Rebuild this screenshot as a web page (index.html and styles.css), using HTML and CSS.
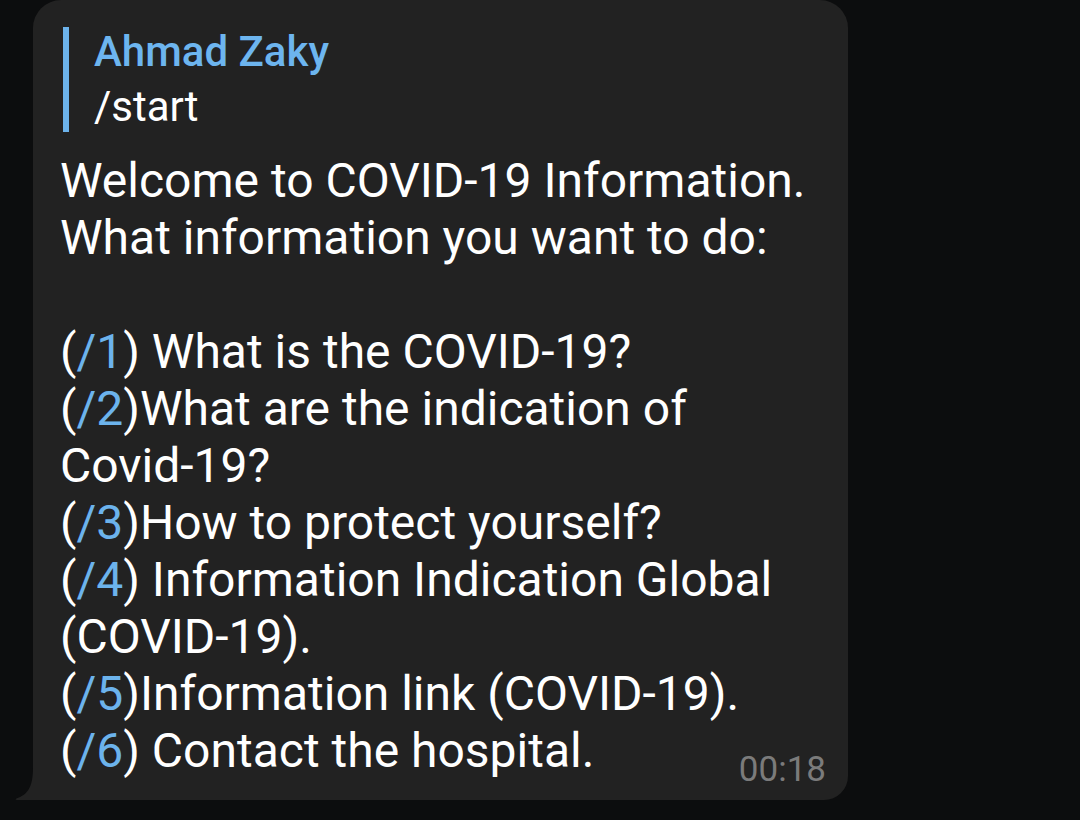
FILE: index.html
```html
<!DOCTYPE html>
<html>
<head>
<meta charset="utf-8">
<link rel="stylesheet" href="styles.css">
</head>
<body>
<div class="chat">
  <div class="bubble">
    <svg class="tail" width="18" height="32" viewBox="0 0 18 32"><path d="M18 0 C18 20 12 27 1.5 30.5 C0 31 0.5 32 2 32 L18 32 Z" fill="#222222"/></svg>
    <div class="reply">
      <div class="reply-name">Ahmad Zaky</div>
      <div class="reply-text">/start</div>
    </div>
    <div class="msg">
      <div class="line">Welcome to COVID-19 Information.</div>
      <div class="line">What information you want to do:</div>
      <div class="line blank">&nbsp;</div>
      <div class="line">(<span class="cmd">/1</span>) What is the COVID-19?</div>
      <div class="line">(<span class="cmd">/2</span>)What are the indication of</div>
      <div class="line">Covid-19?</div>
      <div class="line">(<span class="cmd">/3</span>)How to protect yourself?</div>
      <div class="line">(<span class="cmd">/4</span>) Information Indication Global</div>
      <div class="line">(COVID-19).</div>
      <div class="line">(<span class="cmd">/5</span>)Information link (COVID-19).</div>
      <div class="last-row">
        <div class="line">(<span class="cmd">/6</span>) Contact the hospital.</div>
        <div class="time">00:18</div>
      </div>
    </div>
  </div>
</div>
</body>
</html>
```

FILE: styles.css
```css
html, body {
  margin: 0;
  padding: 0;
}
body {
  background: #0c0d0e;
  width: 1080px;
  height: 820px;
  overflow: hidden;
  font-family: Roboto, "Liberation Sans", sans-serif;
}
.chat {
  padding-left: 33px;
}
.bubble {
  position: relative;
  width: 815px;
  box-sizing: border-box;
  background: #222222;
  border-radius: 28px 28px 24px 0;
  padding: 27px 22px 10px 27px;
  color: #ffffff;
}
.tail {
  position: absolute;
  left: -18px;
  bottom: 0;
  display: block;
}
.reply {
  margin-left: 3px;
  border-left: 6px solid #6cb3ec;
  padding-left: 25px;
  height: 105px;
  box-sizing: border-box;
}
.reply-name {
  font-size: 42px;
  line-height: 45px;
  font-weight: 500;
  color: #6db5ef;
  padding-top: 2px;
  margin-bottom: 10px;
}
.reply-text {
  font-size: 42px;
  line-height: 45px;
  color: #ffffff;
}
.msg {
  margin-top: 20px;
  font-size: 48px;
  line-height: 57px;
}
.line {
  white-space: nowrap;
  height: 57px;
}
.cmd {
  color: #6cb3ec;
}
.last-row {
  display: flex;
  justify-content: space-between;
  align-items: flex-start;
}
.time {
  margin-top: 28px;
  font-size: 35px;
  line-height: 40px;
  color: #7b7b7b;
}
```
